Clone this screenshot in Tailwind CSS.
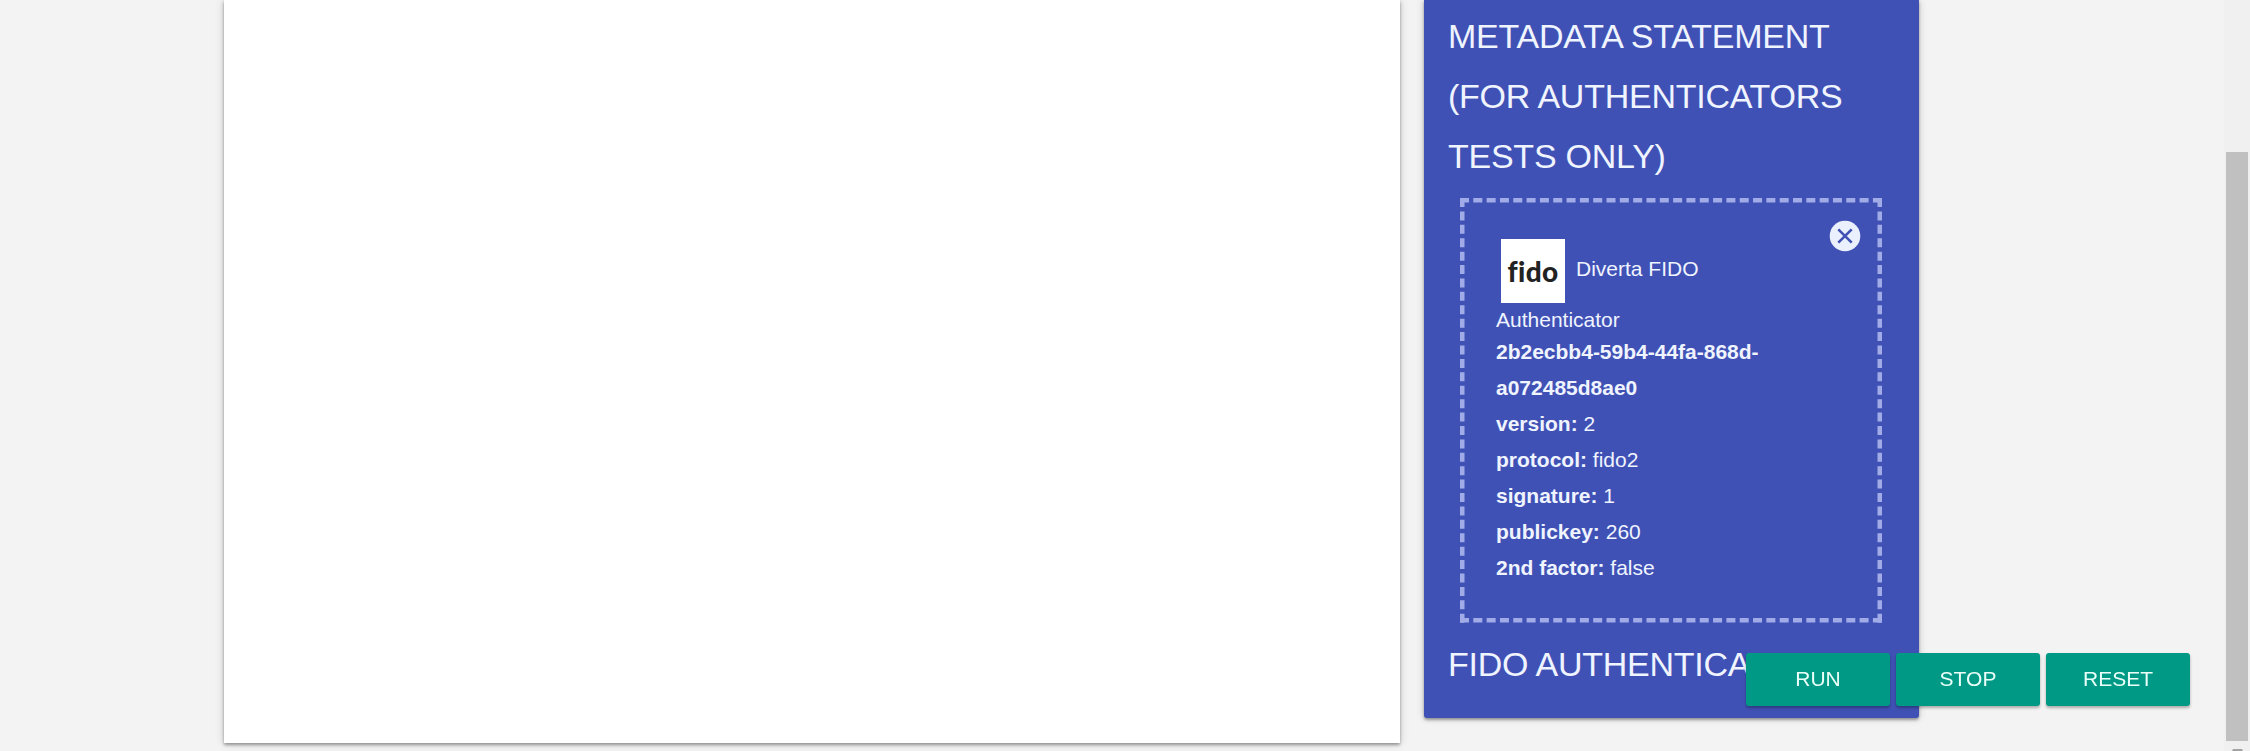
<!DOCTYPE html>
<html lang="en">
<head>
<meta charset="utf-8">
<title>Conformance tests</title>
<script src="https://cdn.jsdelivr.net/npm/@tailwindcss/browser@4"></script>
</head>
<body class="h-[751px] overflow-hidden bg-[#f3f3f3] font-['Liberation_Sans',Arial,sans-serif] text-[21px] text-[#eff4ff]">
<div class="flex h-[751px] items-start justify-between">
  <main class="flex items-start gap-6 pl-56">
    <section class="h-[743px] w-[1176px] bg-white shadow-[0_2px_3px_rgba(0,0,0,0.35),0_0_9px_rgba(0,0,0,0.16)]"></section>
    <aside class="h-[718px] w-[495px] rounded-b-[3px] bg-[#4051b5] px-6 pt-[6px] shadow-[0_2px_3px_rgba(0,0,0,0.35),0_0_9px_rgba(0,0,0,0.16)]">
      <h2 class="whitespace-nowrap text-[34px] leading-[60px] tracking-[-0.25px]">METADATA STATEMENT<br>(FOR AUTHENTICATORS<br>TESTS ONLY)</h2>
      <div class="relative mt-3 ml-3 h-[425px] w-[422px] px-9 pt-[41px]">
        <svg class="absolute inset-0" width="422" height="425" fill="none" stroke="#a0abe8" stroke-width="4.5">
          <path d="M0 2.25H422M0 422.25H422" stroke-dasharray="9 4.32"/>
          <path d="M2.25 0V425M419.75 0V425" stroke-dasharray="9 4.41"/>
        </svg>
        <button class="absolute top-[22px] left-[369px]" aria-label="Remove">
          <svg width="32" height="32" viewBox="0 0 32 32"><circle cx="16" cy="16" r="15.3" fill="#eaf0fd"/><path d="M9.3 9.3L22.7 22.7M22.7 9.3L9.3 22.7" stroke="#4051b5" stroke-width="2.6"/></svg>
        </button>
        <div class="flex items-center gap-[11px] pl-[5px]">
          <div class="flex h-16 w-16 items-center justify-center bg-white font-['Lato',sans-serif] text-[28px] font-black tracking-[0.3px] text-[#222] [font-variant-ligatures:none]">fido</div>
          <span class="pb-1">Diverta FIDO</span>
        </div>
        <div class="pt-[5px] leading-[24px]">Authenticator</div>
        <div class="mt-[2px] leading-9">
          <b>2b2ecbb4-59b4-44fa-868d-<br>a072485d8ae0</b><br>
          <b>version:</b> 2<br>
          <b>protocol:</b> fido2<br>
          <b>signature:</b> 1<br>
          <b>publickey:</b> 260<br>
          <b>2nd factor:</b> false
        </div>
      </div>
      <h2 class="mt-[11px] whitespace-nowrap text-[34px] leading-[60px] tracking-[-0.25px]">FIDO AUTHENTICATOR</h2>
    </aside>
  </main>
  <div class="h-[751px] w-[26px] bg-[#f0f0f0] pt-[152px] pl-[2px]">
    <div class="h-[589px] w-[22px] bg-[#c0c0c0]"></div>
    <svg class="mt-[7px]" width="22" height="3"><path d="M6 3L7 1H16L17 3Z" fill="#a3a3a3"/></svg>
  </div>
</div>
<div class="fixed right-[60px] bottom-[45px] flex gap-[6px] text-[#eafff9]">
  <button class="h-[53px] w-36 rounded-[3px] bg-[#009985] pb-px shadow-[0_2px_3px_rgba(0,0,0,0.3)]">RUN</button>
  <button class="h-[53px] w-36 rounded-[3px] bg-[#009985] pb-px shadow-[0_2px_3px_rgba(0,0,0,0.3)]">STOP</button>
  <button class="h-[53px] w-36 rounded-[3px] bg-[#009985] pb-px shadow-[0_2px_3px_rgba(0,0,0,0.3)]">RESET</button>
</div>
</body>
</html>
